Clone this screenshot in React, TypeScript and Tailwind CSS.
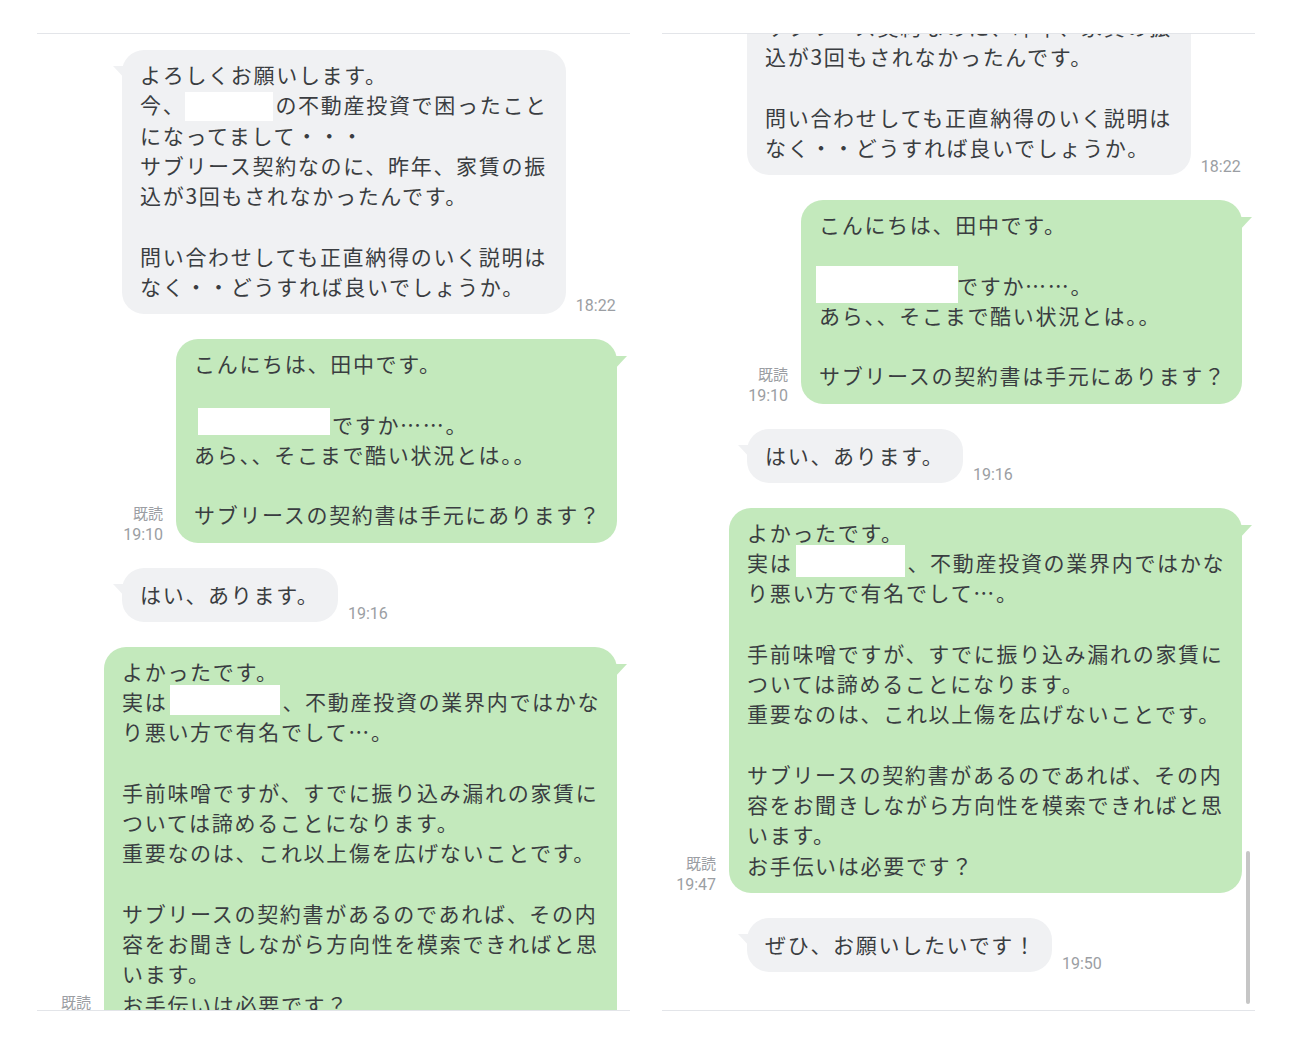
import { useLayoutEffect, useRef } from 'react';

type Box = { advance: number; left: number; top: number; width: number; height: number };
type Line = string | [string, string, string];

type Message = {
    id: number;
    from: 'them' | 'me';
    time: string;
    read?: boolean;
    width?: number;
    lines: Line[];
};

const messages: Message[] = [
    {
        id: 1,
        from: 'them',
        time: '18:22',
        lines: [
            'よろしくお願いします。',
            ['今、', 'company', 'の不動産投資で困ったこと'],
            'になってまして・・・',
            'サブリース契約なのに、昨年、家賃の振',
            '込が3回もされなかったんです。',
            '',
            '問い合わせしても正直納得のいく説明は',
            'なく・・どうすれば良いでしょうか。',
        ],
    },
    {
        id: 2,
        from: 'me',
        time: '19:10',
        read: true,
        width: 441,
        lines: [
            'こんにちは、田中です。',
            '',
            ['', 'name', 'ですか……。'],
            'あら、、そこまで酷い状況とは。。',
            '',
            'サブリースの契約書は手元にあります？',
        ],
    },
    { id: 3, from: 'them', time: '19:16', width: 216, lines: ['はい、あります。'] },
    {
        id: 4,
        from: 'me',
        time: '19:47',
        read: true,
        width: 513,
        lines: [
            'よかったです。',
            ['実は', 'firm', '、不動産投資の業界内ではかな'],
            'り悪い方で有名でして…。',
            '',
            '手前味噌ですが、すでに振り込み漏れの家賃に',
            'ついては諦めることになります。',
            '重要なのは、これ以上傷を広げないことです。',
            '',
            'サブリースの契約書があるのであれば、その内',
            '容をお聞きしながら方向性を模索できればと思',
            'います。',
            'お手伝いは必要です？',
        ],
    },
    { id: 5, from: 'them', time: '19:50', width: 305, lines: ['ぜひ、お願いしたいです！'] },
];

// the two screenshots were blanked out a little differently
const leftBoxes: Record<string, Box> = {
    company: { advance: 90, left: 0, top: 3, width: 88, height: 29 },
    name: { advance: 138, left: 4, top: -1, width: 132, height: 27 },
    firm: { advance: 115, left: 3, top: -1, width: 110, height: 30 },
};

const rightBoxes: Record<string, Box> = {
    company: { advance: 90, left: 0, top: 3, width: 88, height: 29 },
    name: { advance: 138, left: -3, top: -4, width: 142, height: 37 },
    firm: { advance: 115, left: 4, top: -2, width: 109, height: 32 },
};

function Redacted({ box }: { box: Box }) {
    return (
        <span className="relative inline-block h-[30.25px] align-top" style={{ width: box.advance }}>
            <span
                className="absolute bg-white"
                style={{ left: box.left, top: box.top, width: box.width, height: box.height }}
            />
        </span>
    );
}

function Bubble({ msg, boxes }: { msg: Message; boxes: Record<string, Box> }) {
    const me = msg.from === 'me';
    return (
        <div
            className={`relative shrink-0 rounded-[22px] px-[18px] ${
                msg.lines.length === 1 ? 'pt-[11px] pb-[13px]' : 'pt-[9px] pb-[13px]'
            } ${
                me ? 'bg-[#c3e9bc]' : 'bg-[#f0f1f3]'
            } text-[21px] leading-[30.25px] tracking-[1.7px] text-[#3a3d41] font-['Noto_Sans_CJK_JP','Noto_Sans',sans-serif]`}
            style={msg.width ? { width: msg.width } : undefined}
        >
            {me ? (
                <svg className="absolute -right-[10px] top-[17px]" width="14" height="15" viewBox="0 0 14 15">
                    <polygon points="0,0 14,0 0,15" fill="#c3e9bc" />
                </svg>
            ) : (
                <svg className="absolute -left-[9px] top-[16px]" width="14" height="15" viewBox="0 0 14 15">
                    <polygon points="0,0 14,0 14,15" fill="#f0f1f3" />
                </svg>
            )}
            {msg.lines.map((line, i) => (
                <div key={i} className="h-[30.25px] whitespace-nowrap">
                    {typeof line === 'string' ? (
                        line
                    ) : (
                        <>
                            {line[0]}
                            <Redacted box={boxes[line[1]]} />
                            {line[2]}
                        </>
                    )}
                </div>
            ))}
        </div>
    );
}

function Row({ msg, boxes }: { msg: Message; boxes: Record<string, Box> }) {
    const time = (
        <span className="text-[16px] leading-[22px] text-[#9b9ea3] font-['Roboto','Liberation_Sans',sans-serif]">
            {msg.time}
        </span>
    );

    if (msg.from === 'me') {
        return (
            <div className="flex items-end justify-end pr-[13px]">
                <div className="mr-[13px] mb-[-3px] flex flex-col items-end">
                    {msg.read && (
                        <span className="text-[15px] leading-[22px] text-[#9b9ea3] font-['Noto_Sans_CJK_JP',sans-serif]">
                            既読
                        </span>
                    )}
                    {time}
                </div>
                <Bubble msg={msg} boxes={boxes} />
            </div>
        );
    }

    return (
        <div className="flex items-end pl-[85px]">
            <Bubble msg={msg} boxes={boxes} />
            <div className="ml-[10px] mb-[-3px]">{time}</div>
        </div>
    );
}

function ChatPane({ scrollTop, boxes, scrollbar }: { scrollTop: number; boxes: Record<string, Box>; scrollbar?: boolean }) {
    const ref = useRef<HTMLDivElement>(null);

    useLayoutEffect(() => {
        if (ref.current) ref.current.scrollTop = scrollTop;
    }, [scrollTop]);

    return (
        <div className="relative w-[593px] h-[978px] border-y border-[#e3e5e9]">
            <div ref={ref} className="h-full overflow-hidden">
                <div className="flex flex-col gap-[25px] pt-[16px] pb-[38px]">
                    {messages.map((m) => (
                        <Row key={m.id} msg={m} boxes={boxes} />
                    ))}
                </div>
            </div>
            {scrollbar && <div className="absolute right-[5px] top-[817px] h-[153px] w-[4px] rounded-full bg-[#c6c6c6]" />}
        </div>
    );
}

export default function App() {
    return (
        <div className="min-h-[1042px] w-full bg-white flex gap-[32px] pl-[37px] pt-[33px]">
            <ChatPane scrollTop={0} boxes={leftBoxes} />
            <ChatPane scrollTop={139} boxes={rightBoxes} scrollbar />
        </div>
    );
}
